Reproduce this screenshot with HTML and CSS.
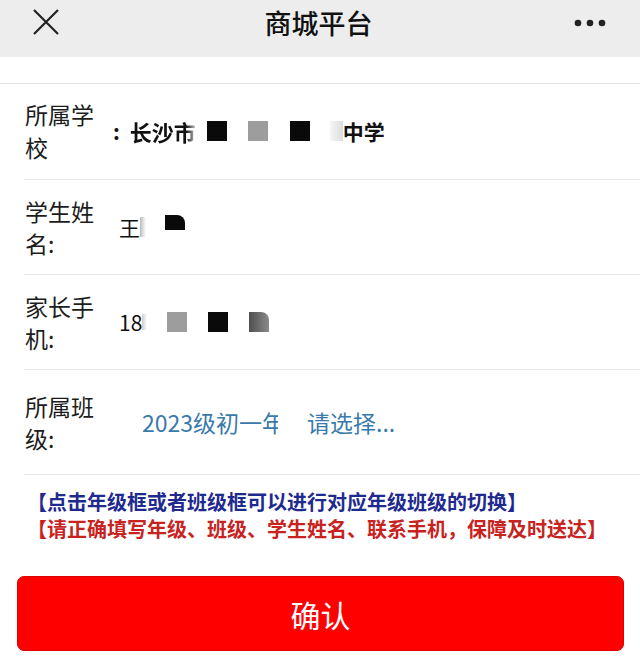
FILE: index.html
```html
<!DOCTYPE html>
<html lang="zh-CN">
<head>
    <meta charset="UTF-8">
    <meta name="viewport" content="width=device-width, initial-scale=1.0">
    <title>商城平台</title>
    <link rel="stylesheet" href="styles.css">
</head>
<body>
    <div class="topbar">
        <span class="topbar-close">
            <svg width="26" height="26" viewBox="0 0 26 26"><path d="M1 1 L25 25 M25 1 L1 25" stroke="#222" stroke-width="2.2" fill="none"/></svg>
        </span>
        <span class="topbar-title">商城平台</span>
        <span class="topbar-more">
            <svg width="34" height="8" viewBox="0 0 34 8"><circle cx="4" cy="4" r="3.3" fill="#222"/><circle cx="16" cy="4" r="3.3" fill="#222"/><circle cx="28" cy="4" r="3.3" fill="#222"/></svg>
        </span>
    </div>
    <div class="spacer"></div>

    <div class="form">
        <div class="row row-school">
            <div class="label">所属学校</div>
            <div class="value value-school">
                <span class="colon">:</span>
                <span class="fade-text">长沙市</span>
                <span class="blk blk-black m11"></span>
                <span class="blk blk-gray m21"></span>
                <span class="blk blk-black m22"></span>
                <span class="blk blk-light m20"></span>
                <span>中学</span>
            </div>
        </div>
        <div class="row">
            <div class="label">学生姓名:</div>
            <div class="value">
                <span>王</span>
                <span class="smear"></span>
                <span class="blk blk-black blk-short blk-round m19"></span>
            </div>
        </div>
        <div class="row">
            <div class="label">家长手机:</div>
            <div class="value">
                <span>18</span>
                <span class="smear smear-small"></span>
                <span class="blk blk-gray m20"></span>
                <span class="blk blk-black m21"></span>
                <span class="blk blk-dark blk-round m21"></span>
            </div>
        </div>
        <div class="row row-class">
            <div class="label">所属班级:</div>
            <div class="value value-select">
                <span class="pick pick-grade">2023级初一年级</span>
                <span class="pick">请选择...</span>
            </div>
        </div>
    </div>

    <div class="notice">
        <div class="notice-blue">【点击年级框或者班级框可以进行对应年级班级的切换】</div>
        <div class="notice-red">【请正确填写年级、班级、学生姓名、联系手机，保障及时送达】</div>
    </div>

    <div class="actions">
        <button class="btn-confirm">确认</button>
    </div>
</body>
</html>
```

FILE: styles.css
```css
body { margin: 0; font-family: "Noto Sans CJK SC", "Noto Sans", sans-serif; background: #fff; color: #1a1a1a; }

.topbar { height: 57px; background: #ededed; display: flex; align-items: center; justify-content: space-between; padding: 0 32px 0 33px; box-sizing: border-box; }
.topbar-close { display: flex; width: 26px; height: 26px; margin-top: -13px; }
.topbar-title { font-size: 27px; font-weight: 500; color: #111; margin-top: -12px; margin-left: 4px; }
.topbar-more { display: flex; margin-top: -12px; }
.spacer { height: 26px; border-bottom: 1px solid #e4e4e4; }

.form { padding-left: 24px; }
.row { display: flex; align-items: center; padding: 15px 0; border-bottom: 1px solid #e6e6e6; }
.row-school { padding: 14px 0 15px; }
.row-school .label { line-height: 33px; }
.row-class { padding: 20px 0; }
.label { width: 72px; padding-left: 1px; font-size: 23px; line-height: 32px; color: #1c1c1c; }
.value { margin-left: 22px; display: flex; align-items: center; font-size: 21px; color: #111; }
.value-school { margin-left: 16px; font-weight: 700; font-size: 21px; }
.colon { margin-right: 10px; }
.fade-text { font-size: 22px; background: linear-gradient(90deg, #111 85%, rgba(17,17,17,0.2)); -webkit-background-clip: text; color: transparent; }

.blk { display: inline-block; width: 20px; height: 20px; }
.blk-black { background: #0a0a0a; }
.blk-gray { background: #9d9d9d; }
.blk-light { width: 13px; background: linear-gradient(90deg, #f6f6f6, #dcdcdc); }
.blk-dark { background: linear-gradient(90deg, #505050, #8a8a8a); }
.blk-short { height: 15px; margin-bottom: 10px; }
.blk-round { border-top-right-radius: 8px; }
.smear { display: inline-block; width: 6px; height: 20px; background: linear-gradient(90deg, #bbb, #fff); }
.smear-small { width: 5px; height: 16px; background: linear-gradient(90deg, #ccc, #fff); }
.m11 { margin-left: 11px; }
.m19 { margin-left: 19px; }
.m20 { margin-left: 20px; }
.m21 { margin-left: 21px; }
.m22 { margin-left: 22px; }

.value-select { margin-left: 45px; font-size: 23px; color: #3a7aaa; }
.pick { white-space: nowrap; }
.pick-grade { width: 136px; overflow: hidden; margin-right: 29px; }

.notice { padding: 13px 0 0 27px; font-size: 20px; font-weight: 700; line-height: 27px; }
.notice-blue { color: #1f2a8f; }
.notice-red { color: #c8231f; }

.actions { padding: 34px 16px 0 17px; }
.btn-confirm { width: 100%; height: 75px; background: #ff0000; border: 1px solid #e00000; border-radius: 7px; color: #fff; font-family: "Noto Sans CJK SC", sans-serif; font-size: 30px; cursor: pointer; }
```
